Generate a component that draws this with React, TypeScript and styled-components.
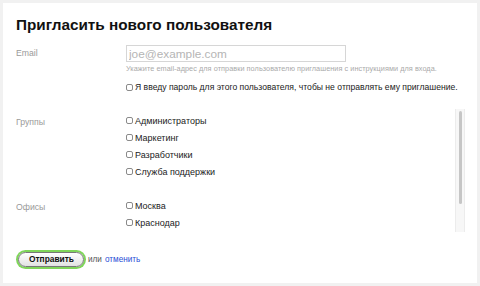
import React from 'react';
import styled, { createGlobalStyle } from 'styled-components';

const PAGE  = '#f1f1f1';
const LBL   = '#9a9a9a';
const TXT   = '#222';
const HINT  = '#aaa';
const LINK  = '#2a4fd6';
const FONT  = `'Liberation Sans', Arial, sans-serif`;

const Global = createGlobalStyle`
  html, body { margin: 0; padding: 0; background: ${PAGE}; }
  body { font-family: ${FONT}; }
`;

const Page = styled.div`
  width: 480px;
  height: 286px;
  padding: 3px;
  box-sizing: border-box;
`;

const Card = styled.div`
  background: #fff;
  width: 474px;
  height: 280px;
  box-sizing: border-box;
  padding: 12px 12px 0 13px;
  display: flex;
  flex-direction: column;
`;

const Title = styled.h1`
  margin: 0 0 10px;
  font-size: 15.3px;
  line-height: 20px;
  font-weight: bold;
  color: #111;
`;

const Row = styled.div`
  display: grid;
  grid-template-columns: 110px 1fr;
`;

const Label = styled.div<{ $top?: number }>`
  font-size: 8.7px;
  color: ${LBL};
  padding-top: ${p => p.$top ?? 2}px;
`;

const Field = styled.div`
  display: flex;
  flex-direction: column;
`;

const Input = styled.input`
  width: 220px;
  height: 17px;
  box-sizing: border-box;
  border: 1px solid #d6d6d6;
  padding: 0 2px;
  font-family: ${FONT};
  font-size: 11.8px;
  color: ${TXT};
  outline: none;
  &::placeholder { color: #b5b5b5; }
`;

const Hint = styled.div`
  font-size: 7.3px;
  line-height: 9px;
  color: ${HINT};
  margin-top: 1.5px;
  letter-spacing: 0.05px;
`;

const Check = styled.input.attrs({ type: 'checkbox' })`
  appearance: none;
  width: 7px;
  height: 7px;
  margin: 0 2px 0 0;
  border: 1px solid #8a8a8a;
  border-radius: 2px;
  background: #fff;
  box-sizing: border-box;
  flex-shrink: 0;
`;

const Option = styled.label<{ $size?: number }>`
  display: flex;
  align-items: center;
  height: 17px;
  white-space: nowrap;
  font-size: ${p => p.$size ?? 9}px;
  color: ${TXT};
`;

const Scroller = styled.div`
  margin-top: 13px;
  height: 123px;
  display: flex;
`;

const ScrollContent = styled.div`
  flex: 1;
  overflow: hidden;
`;

const Track = styled.div`
  width: 10px;
  box-sizing: border-box;
  background: #f7f7f7;
  border-left: 1px solid #ececec;
  border-right: 1px solid #ececec;
  padding: 2px 2px 0 3px;
`;

const Thumb = styled.div`
  height: 93px;
  border-radius: 3px;
  background: #c6c6c6;
`;

const Section = styled(Row)<{ $pad?: number }>`
  padding-top: ${p => p.$pad ?? 4}px;
`;

const Actions = styled.div`
  display: flex;
  align-items: center;
  gap: 3px;
  margin-top: 20px;
  font-size: 8.2px;
  color: #555;
`;

const Submit = styled.button`
  height: 15px;
  padding: 0 9px 0 10px;
  border-radius: 8px;
  border: 1px solid #777;
  background: linear-gradient(#ffffff, #e2e2e2);
  box-shadow: 0 0 0 2px #7fd55a;
  font-family: ${FONT};
  font-size: 8.4px;
  font-weight: bold;
  color: #111;
  margin: 0 1px 0 2px;
`;

const Link = styled.a`
  color: ${LINK};
  text-decoration: none;
`;

const GROUPS = ['Администраторы', 'Маркетинг', 'Разработчики', 'Служба поддержки'];
const OFFICES = ['Москва', 'Краснодар'];

export default function App() {
  return (
    <>
      <Global />
      <Page>
        <Card>
          <Title>Пригласить нового пользователя</Title>
          <Row>
            <Label $top={3}>Email</Label>
            <Field>
              <Input placeholder="joe@example.com" />
              <Hint>Укажите email-адрес для отправки пользователю приглашения с инструкциями для входа.</Hint>
              <Option $size={8.6} style={{ marginTop: 6 }}>
                <Check />Я введу пароль для этого пользователя, чтобы не отправлять ему приглашение.
              </Option>
            </Field>
          </Row>
          <Scroller>
            <ScrollContent>
              <Section $pad={3.5}>
                <Label $top={5}>Группы</Label>
                <Field>
                  {GROUPS.map(g => (
                    <Option key={g}><Check />{g}</Option>
                  ))}
                </Field>
              </Section>
              <Section $pad={17}>
                <Label $top={5}>Офисы</Label>
                <Field>
                  {OFFICES.map(o => (
                    <Option key={o}><Check />{o}</Option>
                  ))}
                </Field>
              </Section>
            </ScrollContent>
            <Track><Thumb /></Track>
          </Scroller>
          <Actions>
            <Submit>Отправить</Submit>
            <span>или</span>
            <Link href="#">отменить</Link>
          </Actions>
        </Card>
      </Page>
    </>
  );
}
